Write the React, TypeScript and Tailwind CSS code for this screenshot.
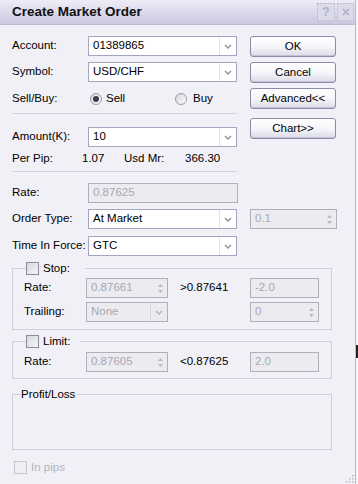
import React from "react"

function Chevron({ light = false }: { light?: boolean }) {
  return (
    <svg width="8" height="5" viewBox="0 0 8 5">
      <path d="M1 1 L4 4 L7 1" fill="none" stroke={light ? "#b4b4c2" : "#8e8ea2"} strokeWidth="1.4" />
    </svg>
  )
}

function SpinArrows() {
  return (
    <div className="flex w-[14px] flex-col items-center justify-center gap-[3px]">
      <svg width="5" height="3" viewBox="0 0 5 3">
        <path d="M0 3 L2.5 0 L5 3 Z" fill="#b8b8c6" />
      </svg>
      <svg width="5" height="3" viewBox="0 0 5 3">
        <path d="M0 0 L2.5 3 L5 0 Z" fill="#b8b8c6" />
      </svg>
    </div>
  )
}

function Combo({ value, w, disabled = false }: { value: string; w: string; disabled?: boolean }) {
  return (
    <div
      className={`flex h-[20px] ${w} border ${
        disabled ? "border-[#b0b0bc] bg-[#ebebf0] text-[#a8a8b4]" : "border-[#a6a5bf] bg-white text-black"
      }`}
    >
      <span className="flex flex-1 items-center pl-[4px] text-[11.5px]">{value}</span>
      <span className={`flex w-[17px] items-center justify-center border-l ${disabled ? "border-[#d4d4dc]" : "border-[#e2e2ea]"}`}>
        <Chevron light={disabled} />
      </span>
    </div>
  )
}

function Field({ value, w, spin = false }: { value: string; w: string; spin?: boolean }) {
  return (
    <div className={`flex h-[20px] ${w} border border-[#b0b0bc] bg-[#ebebf0] text-[#a8a8b4]`}>
      <span className="flex flex-1 items-center pl-[4px] text-[11.5px]">{value}</span>
      {spin && <SpinArrows />}
    </div>
  )
}

function Btn({ label }: { label: string }) {
  return (
    <div className="flex h-[21px] w-[86px] items-center justify-center rounded-[3px] border border-[#8d8ca8] bg-linear-to-b from-white via-[#f6f6fa] to-[#dcdbe8] text-[11.5px] text-black shadow-[inset_0_-1px_0_#c4c3d6]">
      {label}
    </div>
  )
}

function Radio({ checked = false }: { checked?: boolean }) {
  return (
    <span className="flex h-[12px] w-[12px] items-center justify-center rounded-full border border-[#9a9aac] bg-linear-to-br from-[#d4d4dc] to-white">
      {checked && <span className="h-[6px] w-[6px] rounded-full bg-[#3c3c4c]" />}
    </span>
  )
}

function Check({ disabled = false }: { disabled?: boolean }) {
  return (
    <span
      className={`block h-[13px] w-[13px] border ${
        disabled ? "border-[#c4c4ce] bg-[#efeff3]" : "border-[#8b8b9f] bg-linear-to-br from-[#d6d6de] to-[#f6f6f9]"
      }`}
    />
  )
}

function Row({ label, children, className = "" }: { label: string; children: React.ReactNode; className?: string }) {
  return (
    <div className={`flex items-center ${className}`}>
      <span className="w-[76px] shrink-0 whitespace-nowrap">{label}</span>
      {children}
    </div>
  )
}

export default function App() {
  return (
    <div className="flex h-[484px] w-[358px] overflow-hidden bg-[#f4f4f8] font-['Liberation_Sans',Arial,sans-serif] text-[11.5px] leading-none text-black">
      <div className="relative flex w-[356px] shrink-0 flex-col border-r border-[#b9b8cf] bg-[#f1f0f6]">
        {/* title bar */}
        <div className="flex h-[25px] items-center border-b border-[#bcbbd2] bg-linear-to-b from-[#eeedf7] to-[#c9c8df] pl-[12px] pr-[1px]">
          <span className="flex-1 text-[13.5px] font-bold text-[#111]">Create Market Order</span>
          <div className="flex h-[18px] w-[18px] items-center justify-center border border-dotted border-[#b4b3c8] bg-[#dcdbea] text-[12px] font-bold text-[#b0afc4]">
            ?
          </div>
          <div className="ml-[2px] flex h-[18px] w-[17px] items-center justify-center border border-dotted border-[#b4b3c8] bg-[#dcdbea]">
            <svg width="8" height="8" viewBox="0 0 8 8">
              <path d="M1 1 L7 7 M7 1 L1 7" stroke="#b0afc4" strokeWidth="1.6" />
            </svg>
          </div>
        </div>

        <div className="flex flex-col px-[12px]">
          {/* top section */}
          <div className="flex pt-[10px]">
            <div className="flex w-[225px] flex-col pt-[1px]">
              <Row label="Account:">
                <Combo value="01389865" w="w-[149px]" />
              </Row>
              <Row label="Symbol:" className="mt-[6px]">
                <Combo value="USD/CHF" w="w-[149px]" />
              </Row>
              <Row label="Sell/Buy:" className="mt-[7px] h-[20px]">
                <div className="ml-[2px] flex w-[85px] items-center gap-[4px]">
                  <Radio checked />
                  <span>Sell</span>
                </div>
                <div className="flex items-center gap-[6px]">
                  <Radio />
                  <span>Buy</span>
                </div>
              </Row>
              <div className="mt-[4px] h-px bg-[#d3d2de]" />
              <Row label="Amount(K):" className="mt-[13px]">
                <Combo value="10" w="w-[149px]" />
              </Row>
              <div className="mt-[4px] flex h-[16px] items-center">
                <span className="w-[70px]">Per Pip:</span>
                <span className="w-[42px]">1.07</span>
                <span className="w-[61px]">Usd Mr:</span>
                <span>366.30</span>
              </div>
              <div className="mt-[4px] h-px bg-[#d3d2de]" />
            </div>
            <div className="ml-[13px] flex flex-col gap-[5px] pt-[1px]">
              <Btn label="OK" />
              <Btn label="Cancel" />
              <Btn label="Advanced<<" />
              <div className="mt-[4px]">
                <Btn label="Chart>>" />
              </div>
            </div>
          </div>

          {/* order section */}
          <Row label="Rate:" className="mt-[11px]">
            <Field value="0.87625" w="w-[150px]" />
          </Row>
          <Row label="Order Type:" className="mt-[6px]">
            <Combo value="At Market" w="w-[149px]" />
            <div className="ml-[13px]">
              <Field value="0.1" w="w-[87px]" spin />
            </div>
          </Row>
          <Row label="Time In Force:" className="mt-[7px]">
            <Combo value="GTC" w="w-[149px]" />
          </Row>

          {/* stop */}
          <fieldset className="mt-[6px] w-[320px] border border-[#d0cfdb] pb-[7px]">
            <legend className="ml-[13px] flex items-center gap-[4px] pr-[15px]">
              <Check />
              <span>Stop:</span>
            </legend>
            <div className="mt-[3px] flex items-center pl-[11px]">
              <span className="w-[62px]">Rate:</span>
              <Field value="0.87661" w="w-[82px]" spin />
              <span className="ml-[12px] w-[70px]">&gt;0.87641</span>
              <Field value="-2.0" w="w-[69px]" />
            </div>
            <div className="mt-[4px] flex items-center pl-[11px]">
              <span className="w-[62px]">Trailing:</span>
              <Combo value="None" w="w-[82px]" disabled />
              <span className="ml-[12px] w-[70px]" />
              <Field value="0" w="w-[69px]" spin />
            </div>
          </fieldset>

          {/* limit */}
          <fieldset className="mt-[5px] w-[320px] border border-[#d0cfdb] pb-[6px]">
            <legend className="ml-[13px] flex items-center gap-[4px] pr-[10px]">
              <Check />
              <span>Limit:</span>
            </legend>
            <div className="mt-[4px] flex items-center pl-[11px]">
              <span className="w-[62px]">Rate:</span>
              <Field value="0.87605" w="w-[82px]" spin />
              <span className="ml-[12px] w-[70px]">&lt;0.87625</span>
              <Field value="2.0" w="w-[69px]" />
            </div>
          </fieldset>

          {/* profit/loss */}
          <fieldset className="mt-[8px] h-[63px] w-[320px] border border-[#d0cfdb]">
            <legend className="ml-[8px] h-[14px] pr-[2px] leading-[14px]">Profit/Loss</legend>
          </fieldset>

          <div className="mt-[11px] flex items-center gap-[4px] pl-[2px] text-[#b4b4c2]">
            <Check disabled />
            <span>In pips</span>
          </div>
        </div>

        {/* resize grip */}
        <svg className="absolute bottom-[1px] right-[1px]" width="10" height="10" viewBox="0 0 10 10">
          {[
            [8, 2],
            [8, 5],
            [5, 5],
            [8, 8],
            [5, 8],
            [2, 8],
          ].map(([x, y], i) => (
            <rect key={i} x={x} y={y} width="1.5" height="1.5" fill="#b8b7cc" />
          ))}
        </svg>
      </div>
      <div className="flex w-[2px] flex-col">
        <div className="mt-[345px] h-[13px] w-[2px] bg-[#222]" />
      </div>
    </div>
  )
}
